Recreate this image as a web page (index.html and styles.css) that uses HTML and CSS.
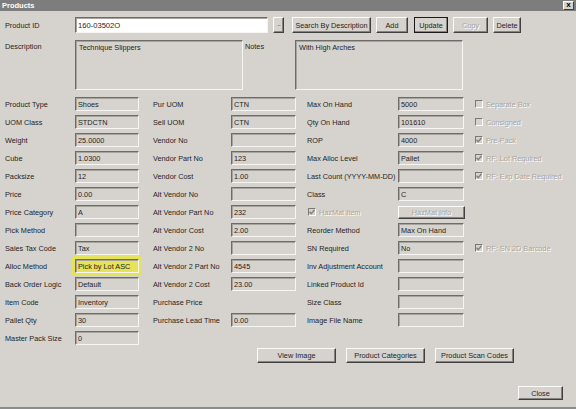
FILE: index.html
```html
<!DOCTYPE html>
<html lang="en">
<head>
    <meta charset="UTF-8">
    <title>Products</title>
    <link rel="stylesheet" href="styles.css">
</head>
<body>
<div class="window">
    <div class="titlebar">
        <span>Products</span>
        <span class="close_x">x</span>
    </div>
    <div class="content">
        <div class="idrow">
            <span class="lbl">Product ID</span>
            <input class="field id_field" value="160-03502O">
            <span class="btn dots">...</span>
            <button class="btn search">Search By Description</button>
            <button class="btn add">Add</button>
            <button class="btn default update">Update</button>
            <button class="btn copy" disabled>Copy</button>
            <button class="btn delete">Delete</button>
        </div>
        <div class="descrow">
            <span class="lbl">Description</span>
            <textarea class="memo" readonly>Technique Slippers</textarea>
            <span class="notes_lbl">Notes</span>
            <textarea class="memo" readonly>With High Arches</textarea>
        </div>

        <div class="fields">
            <div class="col col1">
                <div class="row"><span class="lbl">Product Type</span><input class="field" value="Shoes" readonly></div>
                <div class="row"><span class="lbl">UOM Class</span><input class="field" value="STDCTN" readonly></div>
                <div class="row"><span class="lbl">Weight</span><input class="field" value="25.0000" readonly></div>
                <div class="row"><span class="lbl">Cube</span><input class="field" value="1.0300" readonly></div>
                <div class="row"><span class="lbl">Packsize</span><input class="field" value="12" readonly></div>
                <div class="row"><span class="lbl">Price</span><input class="field" value="0.00" readonly></div>
                <div class="row"><span class="lbl">Price Category</span><input class="field" value="A" readonly></div>
                <div class="row"><span class="lbl">Pick Method</span><input class="field" value="" readonly></div>
                <div class="row"><span class="lbl">Sales Tax Code</span><input class="field" value="Tax" readonly></div>
                <div class="row"><span class="lbl">Alloc Method</span><input class="field marked" value="Pick by Lot ASC" readonly></div>
                <div class="row"><span class="lbl">Back Order Logic</span><input class="field" value="Default" readonly></div>
                <div class="row"><span class="lbl">Item Code</span><input class="field" value="Inventory" readonly></div>
                <div class="row"><span class="lbl">Pallet Qty</span><input class="field" value="30" readonly></div>
                <div class="row"><span class="lbl">Master Pack Size</span><input class="field" value="0" readonly></div>
            </div>
            <div class="col col2">
                <div class="row"><span class="lbl">Pur UOM</span><input class="field" value="CTN" readonly></div>
                <div class="row"><span class="lbl">Sell UOM</span><input class="field" value="CTN" readonly></div>
                <div class="row"><span class="lbl">Vendor No</span><input class="field" value="" readonly></div>
                <div class="row"><span class="lbl">Vendor Part No</span><input class="field" value="123" readonly></div>
                <div class="row"><span class="lbl">Vendor Cost</span><input class="field" value="1.00" readonly></div>
                <div class="row"><span class="lbl">Alt Vendor No</span><input class="field" value="" readonly></div>
                <div class="row"><span class="lbl">Alt Vendor Part No</span><input class="field" value="232" readonly></div>
                <div class="row"><span class="lbl">Alt Vendor Cost</span><input class="field" value="2.00" readonly></div>
                <div class="row"><span class="lbl">Alt Vendor 2 No</span><input class="field" value="" readonly></div>
                <div class="row"><span class="lbl">Alt Vendor 2 Part No</span><input class="field" value="4545" readonly></div>
                <div class="row"><span class="lbl">Alt Vendor 2 Cost</span><input class="field" value="23.00" readonly></div>
                <div class="row"><span class="lbl">Purchase Price</span></div>
                <div class="row"><span class="lbl">Purchase Lead Time</span><input class="field" value="0.00" readonly></div>
            </div>
            <div class="col col3">
                <div class="row"><span class="lbl">Max On Hand</span><input class="field" value="5000" readonly></div>
                <div class="row"><span class="lbl">Qty On Hand</span><input class="field" value="101610" readonly></div>
                <div class="row"><span class="lbl">ROP</span><input class="field" value="4000" readonly></div>
                <div class="row"><span class="lbl">Max Alloc Level</span><input class="field" value="Pallet" readonly></div>
                <div class="row"><span class="lbl">Last Count (YYYY-MM-DD)</span><input class="field" value="" readonly></div>
                <div class="row"><span class="lbl">Class</span><input class="field" value="C" readonly></div>
                <div class="row">
                    <span class="lbl check_lbl">
                        <span class="check"><svg width="6" height="6" viewBox="0 0 6 6"><polyline points="0.5,2.8 2.2,4.6 5.6,0.8"/></svg></span>
                        <span class="off">HazMat Item</span>
                    </span>
                    <button class="btn hazmat" disabled>HazMat Info</button>
                </div>
                <div class="row"><span class="lbl">Reorder Method</span><input class="field" value="Max On Hand" readonly></div>
                <div class="row"><span class="lbl">SN Required</span><input class="field" value="No" readonly></div>
                <div class="row"><span class="lbl">Inv Adjustment Account</span><input class="field" value="" readonly></div>
                <div class="row"><span class="lbl">Linked Product Id</span><input class="field" value="" readonly></div>
                <div class="row"><span class="lbl">Size Class</span><input class="field" value="" readonly></div>
                <div class="row"><span class="lbl">Image File Name</span><input class="field" value="" readonly></div>
            </div>
            <div class="col col4">
                <div class="row"><span class="check"></span><span class="off">Separate Box</span></div>
                <div class="row"><span class="check"></span><span class="off">Consigned</span></div>
                <div class="row"><span class="check"><svg width="6" height="6" viewBox="0 0 6 6"><polyline points="0.5,2.8 2.2,4.6 5.6,0.8"/></svg></span><span class="off">Pre-Pack</span></div>
                <div class="row"><span class="check"><svg width="6" height="6" viewBox="0 0 6 6"><polyline points="0.5,2.8 2.2,4.6 5.6,0.8"/></svg></span><span class="off">RF: Lot Required</span></div>
                <div class="row"><span class="check"><svg width="6" height="6" viewBox="0 0 6 6"><polyline points="0.5,2.8 2.2,4.6 5.6,0.8"/></svg></span><span class="off">RF: Exp Date Required</span></div>
                <div class="row"></div>
                <div class="row"></div>
                <div class="row"></div>
                <div class="row"><span class="check"><svg width="6" height="6" viewBox="0 0 6 6"><polyline points="0.5,2.8 2.2,4.6 5.6,0.8"/></svg></span><span class="off">RF: SN 2D Barcode</span></div>
            </div>
        </div>

        <div class="actions">
            <button class="btn wide">View Image</button>
            <button class="btn wide">Product Categories</button>
            <button class="btn wide">Product Scan Codes</button>
        </div>
        <div class="footer">
            <button class="btn close">Close</button>
        </div>
    </div>
</div>
</body>
</html>
```

FILE: styles.css
```css
html, body {
    margin: 0px;
    font-size: 7.3px;
    font-family: "Liberation Sans", Arial, sans-serif;
    color: #1e1e1e;
}

.window {
    width: 576px;
    height: 409px;
    box-sizing: border-box;
    background-color: #d6d3ce;
    border-bottom: 2px solid #8c8c8c;
}

.titlebar {
    height: 11px;
    background-color: #7d7d7d;
    display: flex;
    align-items: center;
    justify-content: space-between;
    padding: 0 2px;
    color: #fff;
    font-weight: bold;
    font-size: 7.5px;
}

.close_x {
    width: 11px;
    height: 9px;
    box-sizing: border-box;
    background-color: #d6d3ce;
    border: 1px solid;
    border-color: #fff #404040 #404040 #fff;
    color: #000;
    font-size: 8px;
    line-height: 6px;
    text-align: center;
}

.content {
    padding: 6px 0 0 5px;
}

.lbl {
    width: 70px;
    flex: none;
    white-space: nowrap;
}

.field {
    box-sizing: border-box;
    width: 64px;
    height: 14px;
    margin: 0;
    padding: 1px 2px 0 2px;
    font: inherit;
    color: #1e1e1e;
    background-color: #d6d3ce;
    border: 1px solid;
    border-color: #6e6c68 #f6f5f3 #f6f5f3 #6e6c68;
    box-shadow: inset 1px 1px #a7a49f;
    outline: none;
}

.field.marked {
    background-color: #e6e35a;
    box-shadow: inset 1px 1px #a7a49f, 0 0 0 3px #e6e35a;
    border-radius: 1px;
}

.btn {
    box-sizing: border-box;
    height: 16px;
    margin: 0;
    padding: 0;
    font: inherit;
    color: #1e1e1e;
    background-color: #d6d3ce;
    border: 1px solid;
    border-color: #fbfbfa #404040 #404040 #fbfbfa;
    box-shadow: inset -1px -1px #85837f;
}

.btn[disabled] {
    color: #a9a59f;
    text-shadow: 1px 1px #fff;
}

.btn.default {
    outline: 1px solid #1a1a1a;
    outline-offset: -1px;
    border-color: #fbfbfa #404040 #404040 #fbfbfa;
}

/* top row */
.idrow {
    display: flex;
    align-items: center;
    height: 16px;
}

.id_field {
    width: 193px;
    height: 16px;
    background-color: #fff;
    font-size: 7.6px;
}

.dots {
    display: block;
    width: 11px;
    margin-left: 5px;
    color: #6a6864;
    font-size: 7px;
    line-height: 12px;
    letter-spacing: -1px;
    text-align: center;
    overflow: hidden;
}

.search {
    width: 79px;
    margin-left: 8px;
}

.add {
    width: 32px;
    margin-left: 5px;
}

.update {
    width: 34px;
    margin-left: 6px;
}

.copy {
    width: 35px;
    margin-left: 5px;
}

.delete {
    width: 28px;
    margin-left: 5px;
}

.descrow {
    display: flex;
    align-items: flex-start;
    margin-top: 7px;
}

.descrow .lbl {
    padding-top: 2px;
}

.notes_lbl {
    width: 50px;
    padding: 2px 0 0 2px;
}

.memo {
    box-sizing: border-box;
    width: 168px;
    height: 50px;
    margin: 0;
    padding: 2px 3px;
    font: inherit;
    color: #1e1e1e;
    background-color: #d6d3ce;
    border: 1px solid;
    border-color: #6e6c68 #f6f5f3 #f6f5f3 #6e6c68;
    box-shadow: inset 1px 1px #a7a49f;
    resize: none;
    outline: none;
}

/* field grid */
.fields {
    display: flex;
    margin-top: 5px;
}

.col {
    display: flex;
    flex-direction: column;
}

.row {
    height: 18px;
    display: flex;
    align-items: center;
}

.col2 {
    margin-left: 14px;
}

.col2 .lbl {
    width: 78px;
}

.col2 .field {
    width: 65px;
}

.col3 {
    margin-left: 11px;
}

.col3 .lbl {
    width: 91px;
}

.col3 .field {
    width: 66px;
}

.col4 {
    margin-left: 10px;
}

.check_lbl {
    display: flex;
    align-items: center;
}

.check {
    box-sizing: border-box;
    width: 8px;
    height: 8px;
    margin-right: 3px;
    flex: none;
    display: flex;
    align-items: center;
    justify-content: center;
    background-color: #d6d3ce;
    border: 1px solid;
    border-color: #7a7874 #fff #fff #7a7874;
}

.check svg {
    fill: none;
    stroke: #85827d;
    stroke-width: 1.4;
}

.check_lbl .check {
    margin-left: 1px;
}

.off {
    color: #a9a59f;
    text-shadow: 1px 1px #fff;
}

.hazmat {
    width: 67px;
    height: 13px;
}

/* bottom buttons */
.actions {
    display: flex;
    margin-top: 1px;
    padding-left: 252px;
}

.wide {
    width: 79px;
    height: 15px;
    margin-right: 10px;
}

.footer {
    display: flex;
    justify-content: flex-end;
    margin-top: 23px;
    padding-right: 13px;
}

.close {
    width: 45px;
    height: 14px;
}
```
